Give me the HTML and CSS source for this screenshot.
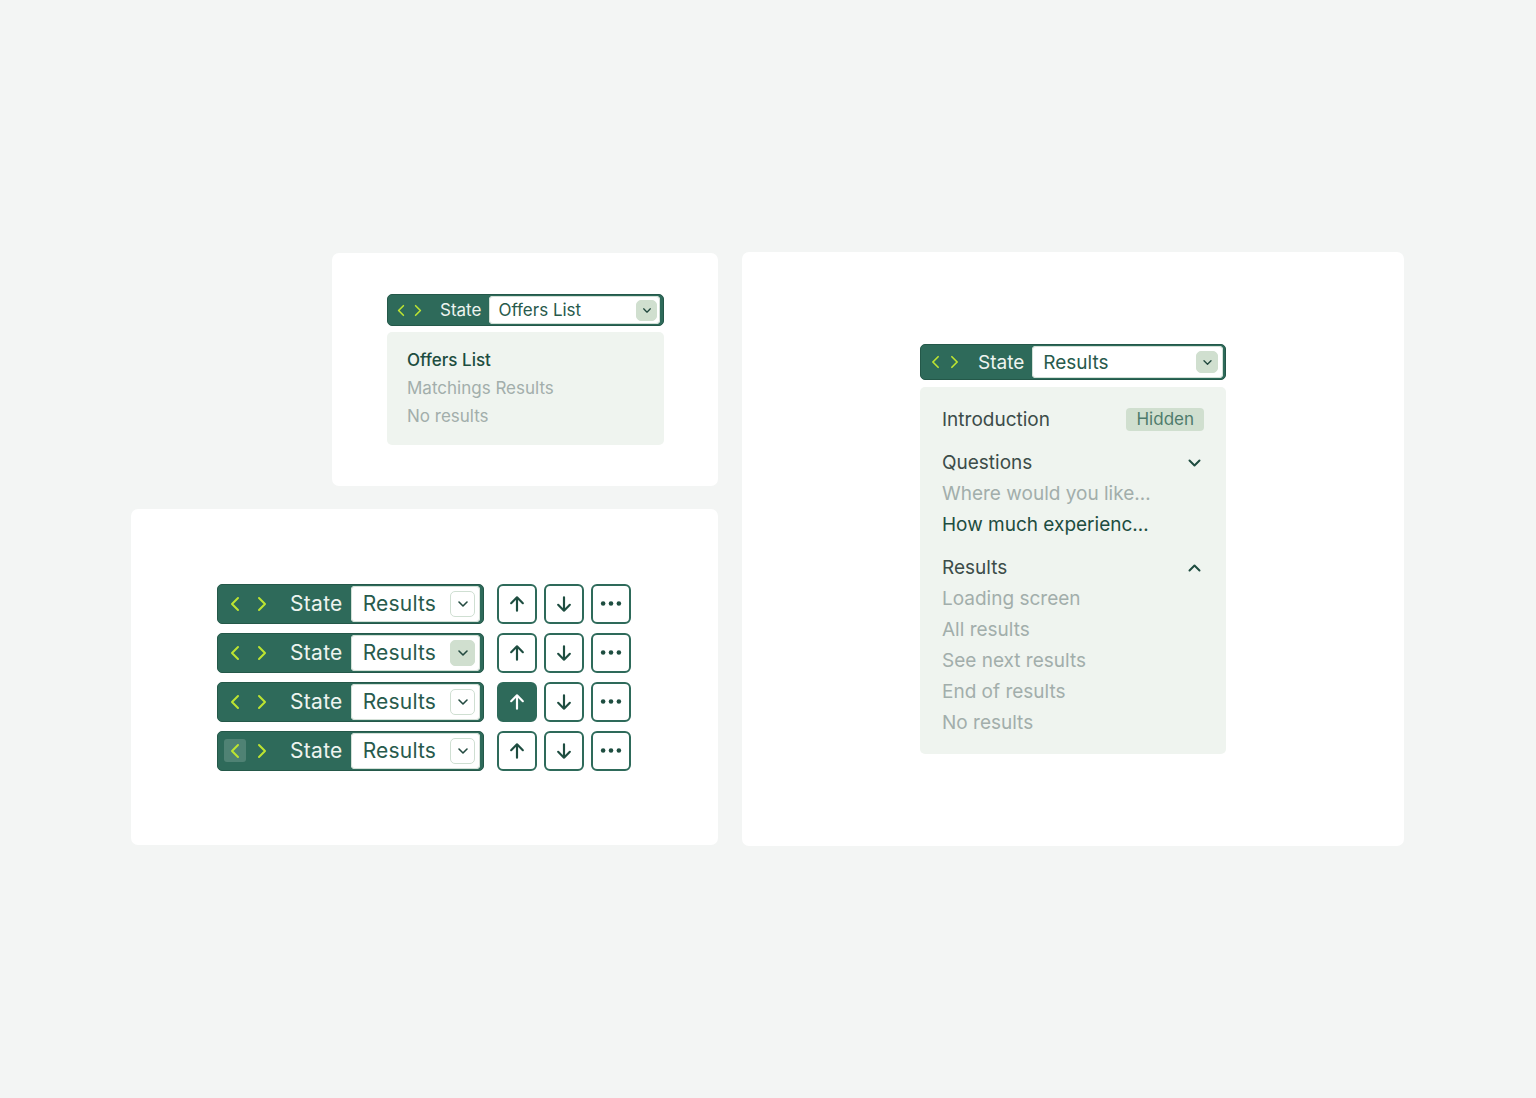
FILE: index.html
```html
<!DOCTYPE html>
<html lang="en">
<head>
<meta charset="utf-8">
<title>State selector</title>
<link rel="stylesheet" href="styles.css">
</head>
<body>
<svg width="0" height="0" class="defs">
  <defs>
    <symbol id="chev-l" viewBox="0 0 10 16"><path d="M8 2L2 8l6 6" fill="none" stroke="currentColor" stroke-width="2" stroke-linecap="round" stroke-linejoin="round"/></symbol>
    <symbol id="chev-r" viewBox="0 0 10 16"><path d="M2 2l6 6-6 6" fill="none" stroke="currentColor" stroke-width="2" stroke-linecap="round" stroke-linejoin="round"/></symbol>
    <symbol id="chev-d" viewBox="0 0 12 8"><path d="M2 2l4 4 4-4" fill="none" stroke="currentColor" stroke-width="1.6" stroke-linecap="round" stroke-linejoin="round"/></symbol>
    <symbol id="arrow-up" viewBox="0 0 24 24"><path d="M12 20V4M5 11l7-7 7 7" fill="none" stroke="currentColor" stroke-width="2.6" stroke-linecap="round" stroke-linejoin="round"/></symbol>
    <symbol id="arrow-down" viewBox="0 0 24 24"><path d="M12 4v16M5 13l7 7 7-7" fill="none" stroke="currentColor" stroke-width="2.6" stroke-linecap="round" stroke-linejoin="round"/></symbol>
    <symbol id="dots" viewBox="0 0 24 8"><circle cx="3" cy="4" r="2.6" fill="currentColor"/><circle cx="12" cy="4" r="2.6" fill="currentColor"/><circle cx="21" cy="4" r="2.6" fill="currentColor"/></symbol>
  </defs>
</svg>

<main class="canvas">
  <div class="col-left">
    <section class="card card-offers">
      <div class="stack stack-s">
        <div class="toolbar tb-s">
          <div class="nav">
            <span class="nav-btn"><svg><use href="#chev-l"/></svg></span>
            <span class="nav-btn"><svg><use href="#chev-r"/></svg></span>
          </div>
          <span class="label">State</span>
          <div class="select">
            <span class="select-text">Offers List</span>
            <span class="caret caret-filled"><svg><use href="#chev-d"/></svg></span>
          </div>
        </div>
        <ul class="menu menu-s">
          <li class="item item-active item-strong">Offers List</li>
          <li class="item item-muted">Matchings Results</li>
          <li class="item item-muted">No results</li>
        </ul>
      </div>
    </section>

    <section class="card card-rows">
      <div class="rows">
        <div class="row">
          <div class="toolbar tb-m">
            <div class="nav">
              <span class="nav-btn"><svg><use href="#chev-l"/></svg></span>
              <span class="nav-btn"><svg><use href="#chev-r"/></svg></span>
            </div>
            <span class="label">State</span>
            <div class="select">
              <span class="select-text">Results</span>
              <span class="caret"><svg><use href="#chev-d"/></svg></span>
            </div>
          </div>
          <div class="actions">
            <span class="icon-btn"><svg class="ic-arrow"><use href="#arrow-up"/></svg></span>
            <span class="icon-btn"><svg class="ic-arrow"><use href="#arrow-down"/></svg></span>
            <span class="icon-btn"><svg class="ic-dots"><use href="#dots"/></svg></span>
          </div>
        </div>

        <div class="row">
          <div class="toolbar tb-m">
            <div class="nav">
              <span class="nav-btn"><svg><use href="#chev-l"/></svg></span>
              <span class="nav-btn"><svg><use href="#chev-r"/></svg></span>
            </div>
            <span class="label">State</span>
            <div class="select">
              <span class="select-text">Results</span>
              <span class="caret caret-filled"><svg><use href="#chev-d"/></svg></span>
            </div>
          </div>
          <div class="actions">
            <span class="icon-btn"><svg class="ic-arrow"><use href="#arrow-up"/></svg></span>
            <span class="icon-btn"><svg class="ic-arrow"><use href="#arrow-down"/></svg></span>
            <span class="icon-btn"><svg class="ic-dots"><use href="#dots"/></svg></span>
          </div>
        </div>

        <div class="row">
          <div class="toolbar tb-m">
            <div class="nav">
              <span class="nav-btn"><svg><use href="#chev-l"/></svg></span>
              <span class="nav-btn"><svg><use href="#chev-r"/></svg></span>
            </div>
            <span class="label">State</span>
            <div class="select">
              <span class="select-text">Results</span>
              <span class="caret"><svg><use href="#chev-d"/></svg></span>
            </div>
          </div>
          <div class="actions">
            <span class="icon-btn icon-btn-active"><svg class="ic-arrow"><use href="#arrow-up"/></svg></span>
            <span class="icon-btn"><svg class="ic-arrow"><use href="#arrow-down"/></svg></span>
            <span class="icon-btn"><svg class="ic-dots"><use href="#dots"/></svg></span>
          </div>
        </div>

        <div class="row">
          <div class="toolbar tb-m">
            <div class="nav">
              <span class="nav-btn nav-btn-hover"><svg><use href="#chev-l"/></svg></span>
              <span class="nav-btn"><svg><use href="#chev-r"/></svg></span>
            </div>
            <span class="label">State</span>
            <div class="select">
              <span class="select-text">Results</span>
              <span class="caret"><svg><use href="#chev-d"/></svg></span>
            </div>
          </div>
          <div class="actions">
            <span class="icon-btn"><svg class="ic-arrow"><use href="#arrow-up"/></svg></span>
            <span class="icon-btn"><svg class="ic-arrow"><use href="#arrow-down"/></svg></span>
            <span class="icon-btn"><svg class="ic-dots"><use href="#dots"/></svg></span>
          </div>
        </div>
      </div>
    </section>
  </div>

  <section class="card card-tree">
    <div class="stack stack-l">
      <div class="toolbar tb-l">
        <div class="nav">
          <span class="nav-btn"><svg><use href="#chev-l"/></svg></span>
          <span class="nav-btn"><svg><use href="#chev-r"/></svg></span>
        </div>
        <span class="label">State</span>
        <div class="select">
          <span class="select-text">Results</span>
          <span class="caret caret-filled"><svg><use href="#chev-d"/></svg></span>
        </div>
      </div>
      <div class="menu menu-l">
        <div class="group-head">
          <span class="head-text">Introduction</span>
          <span class="badge">Hidden</span>
        </div>
        <div class="group-head group-gap">
          <span class="head-text">Questions</span>
          <span class="toggle"><svg><use href="#chev-d"/></svg></span>
        </div>
        <div class="item item-muted">Where would you like…</div>
        <div class="item item-active">How much experienc…</div>
        <div class="group-head group-gap">
          <span class="head-text">Results</span>
          <span class="toggle toggle-up"><svg><use href="#chev-d"/></svg></span>
        </div>
        <div class="item item-muted">Loading screen</div>
        <div class="item item-muted">All results</div>
        <div class="item item-muted">See next results</div>
        <div class="item item-muted">End of results</div>
        <div class="item item-muted">No results</div>
      </div>
    </div>
  </section>
</main>
</body>
</html>
```

FILE: styles.css
```css
* { box-sizing: border-box; }

html, body {
  margin: 0;
  padding: 0;
}

body {
  background: #f3f5f4;
  font-family: "Inter", "DejaVu Sans", sans-serif;
  width: 1536px;
  height: 1098px;
  overflow: hidden;
}

.defs { position: absolute; }

.canvas {
  display: flex;
  gap: 24px;
  padding: 252px 0 0 131px;
  align-items: flex-start;
}

.col-left {
  display: flex;
  flex-direction: column;
  align-items: flex-end;
  gap: 23px;
  width: 587px;
  padding-top: 1px;
}

.card {
  background: #ffffff;
  border-radius: 7px;
  display: flex;
  align-items: center;
  justify-content: center;
}

.card-offers {
  width: 386px;
  height: 233px;
  align-items: flex-start;
  padding-top: 41px;
  padding-right: 54px;
  justify-content: flex-end;
}

.card-rows {
  width: 587px;
  height: 336px;
}

.card-tree {
  width: 662px;
  height: 594px;
  align-items: flex-start;
  padding-top: 92px;
}

/* ---------- toolbar ---------- */
.stack {
  display: flex;
  flex-direction: column;
}
.stack-s { gap: 6px; width: 277px; }
.stack-l { gap: 7px; width: 306px; }

.toolbar {
  display: flex;
  align-items: center;
  background: #2e6a5a;
  border: 1px solid #245849;
  border-radius: 5px;
  color: #eef4f0;
}

.nav {
  display: flex;
  align-items: center;
}

.nav-btn {
  display: flex;
  align-items: center;
  justify-content: center;
  color: #bde431;
  border-radius: 3px;
}
.nav-btn svg { display: block; }

.nav-btn-hover { background: rgba(255, 255, 255, 0.16); }

.label { white-space: nowrap; }

.select {
  flex: 1;
  display: flex;
  align-items: center;
  justify-content: space-between;
  background: #ffffff;
  border-radius: 4px;
  box-shadow: inset 0 0 0 1px #d3e0d7;
  color: #285a4c;
}

.caret {
  display: flex;
  align-items: center;
  justify-content: center;
  border: 1.5px solid #cfdfd2;
  border-radius: 5px;
  color: #234a40;
  background: #ffffff;
}
.caret-filled {
  background: #d0dfcf;
  border-color: #d0dfcf;
}
.caret svg { display: block; }

/* small */
.tb-s { height: 32px; width: 277px; padding: 0 3px 0 4px; }
.tb-s .nav-btn { width: 17px; height: 20px; }
.tb-s .nav-btn svg { width: 8px; height: 13px; }
.tb-s .label { font-size: 17px; margin: 0 8px 0 14px; }
.tb-s .select { height: 28px; padding: 0 3px 0 9px; font-size: 17px; }
.tb-s .caret { width: 21px; height: 21px; }
.tb-s .caret svg { width: 10px; height: 7px; }

/* medium */
.tb-m { height: 40px; width: 267px; padding: 0 3px 0 6px; }
.tb-m .nav { gap: 5px; }
.tb-m .nav-btn { width: 22px; height: 23px; }
.tb-m .nav-btn svg { width: 10px; height: 16px; }
.tb-m .label { font-size: 21px; letter-spacing: 0.3px; margin: 0 8px 0 17px; }
.tb-m .select { height: 36px; padding: 0 5px 0 12px; font-size: 21px; letter-spacing: 0.2px; }
.tb-m .caret { width: 25px; height: 26px; }
.tb-m .caret svg { width: 12px; height: 8px; }

/* large */
.tb-l { height: 36px; width: 306px; padding: 0 2px 0 5px; }
.tb-l .nav-btn { width: 19px; height: 22px; }
.tb-l .nav-btn svg { width: 9px; height: 14px; }
.tb-l .label { font-size: 19px; margin: 0 8px 0 14px; }
.tb-l .select { height: 32px; padding: 0 5px 0 11px; font-size: 19px; }
.tb-l .caret { width: 22px; height: 22px; }
.tb-l .caret svg { width: 11px; height: 7px; }

/* ---------- menus ---------- */
.menu {
  margin: 0;
  list-style: none;
  background: #eff4ef;
  border-radius: 5px;
}

.menu-s {
  padding: 14px 20px 15px;
  font-size: 17px;
  line-height: 28px;
}

.menu-l {
  padding: 17px 22px 16px;
  font-size: 19px;
  line-height: 31px;
}

.item { white-space: nowrap; }
.item-active { color: #1d4d40; }
.item-strong { font-weight: 500; }
.item-muted { color: #a2aeab; }

.group-head {
  display: flex;
  align-items: center;
  justify-content: space-between;
  color: #3c4c49;
}
.group-gap { margin-top: 12px; }

.badge {
  background: #d0dfcf;
  color: #4e7b6c;
  font-size: 17px;
  line-height: 23px;
  padding: 0 10px;
  border-radius: 4px;
}

.toggle {
  display: flex;
  width: 20px;
  justify-content: center;
  color: #1f4c40;
}
.toggle svg { width: 15px; height: 10px; display: block; }
.toggle-up svg { transform: rotate(180deg); }

/* ---------- rows ---------- */
.rows {
  display: flex;
  flex-direction: column;
  gap: 9px;
  margin-right: 1px;
}

.row {
  display: flex;
  align-items: center;
  gap: 13px;
}

.actions {
  display: flex;
  gap: 7px;
}

.icon-btn {
  width: 40px;
  height: 40px;
  border: 2px solid #2e6a5a;
  border-radius: 6px;
  background: #ffffff;
  color: #1e4d40;
  display: flex;
  align-items: center;
  justify-content: center;
}
.icon-btn-active {
  background: #2e6a5a;
  color: #ffffff;
}
.ic-arrow { width: 20px; height: 20px; display: block; }
.ic-dots { width: 22px; height: 7px; display: block; }
```
